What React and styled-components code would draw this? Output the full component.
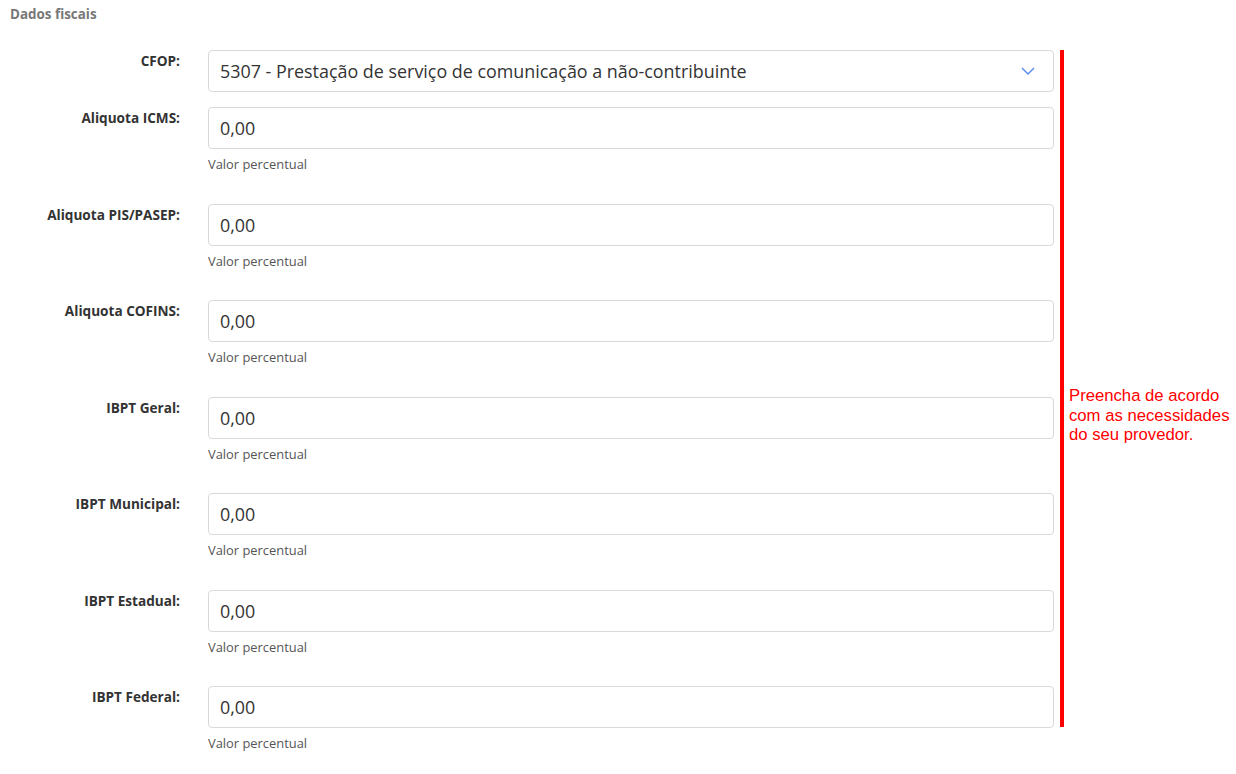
import React from "react";
import styled, { createGlobalStyle } from "styled-components";

const Global = createGlobalStyle`
  html, body { margin: 0; padding: 0; background: #fff; }
  body { font-family: "Open Sans", "Noto Sans", sans-serif; color: #333; }
  * { box-sizing: border-box; }
`;

const Page = styled.div`
  padding: 5px 0 0 10px;
  width: 1236px;
`;

const Title = styled.div`
  font-size: 13.4px;
  font-weight: 700;
  color: #777;
  line-height: 19px;
  margin-bottom: 26px;
`;

const Layout = styled.div`
  display: flex;
  align-items: flex-start;
`;

const Fields = styled.div`
  display: flex;
  flex-direction: column;
  flex: 0 0 1045px;
`;

const Row = styled.div`
  display: grid;
  grid-template-columns: 170px 846px;
  column-gap: 28px;
  margin-bottom: ${(p) => p.$gap}px;
`;

const Label = styled.label`
  text-align: right;
  font-size: 13.6px;
  font-weight: 700;
  color: #333;
  line-height: 18px;
  padding-top: 2px;
`;

const Control = styled.div`
  display: flex;
  flex-direction: column;
`;

const Box = styled.div`
  position: relative;
  height: 42px;
  border: 1px solid #d9d9d9;
  border-radius: 4px;
  background: #fff;
  display: flex;
  align-items: center;
  padding: 0 11px;
  font-size: 17.9px;
  color: #333;
`;

const Chevron = styled.svg`
  position: absolute;
  right: 18px;
  top: 16px;
`;

const Help = styled.div`
  font-size: 12.9px;
  color: #555;
  line-height: 17.5px;
  margin-top: 7px;
`;

const Note = styled.div`
  flex: 1 1 auto;
  min-width: 0;
  align-self: stretch;
  margin-left: 5px;
  margin-bottom: 25.5px;
  border-left: 4px solid #ff0000;
  padding: 54px 0 0 5px;
  display: flex;
  align-items: center;
  color: #ff0000;
  font-family: "Liberation Sans", Arial, sans-serif;
  font-size: 16.7px;
  line-height: 19.5px;
`;

const fields = [
  "Aliquota ICMS:",
  "Aliquota PIS/PASEP:",
  "Aliquota COFINS:",
  "IBPT Geral:",
  "IBPT Municipal:",
  "IBPT Estadual:",
  "IBPT Federal:",
];

export default function App() {
  return (
    <Page>
      <Global />
      <Title>Dados fiscais</Title>
      <Layout>
        <Fields>
          <Row $gap={15}>
            <Label>CFOP:</Label>
            <Control>
              <Box>
                5307 - Prestação de serviço de comunicação a não-contribuinte
                <Chevron width="14" height="9" viewBox="0 0 14 9">
                  <polyline points="1,1 7,7 13,1" fill="none" stroke="#5b8def" strokeWidth="1.5" />
                </Chevron>
              </Box>
            </Control>
          </Row>
          {fields.map((f, i) => (
            <Row key={f} $gap={i === fields.length - 1 ? 0 : 30}>
              <Label>{f}</Label>
              <Control>
                <Box>0,00</Box>
                <Help>Valor percentual</Help>
              </Control>
            </Row>
          ))}
        </Fields>
        <Note>
          Preencha de acordo com as necessidades do seu provedor.
        </Note>
      </Layout>
    </Page>
  );
}
